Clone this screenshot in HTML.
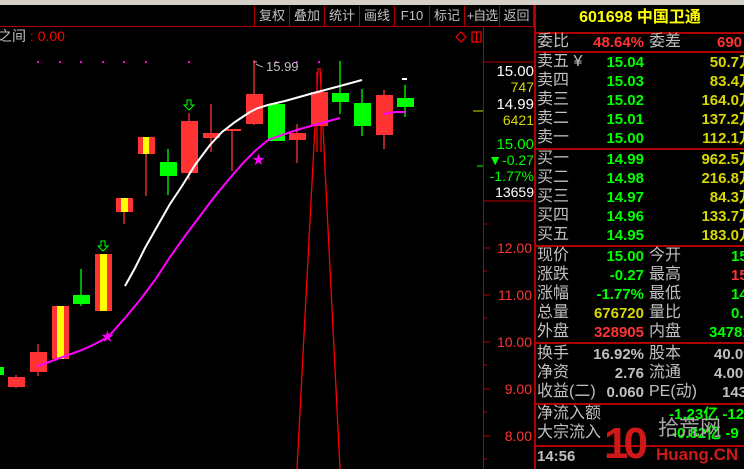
<!DOCTYPE html>
<html><head><meta charset="utf-8"><style>
*{margin:0;padding:0;box-sizing:border-box}
body{width:744px;height:469px;background:#000;overflow:hidden;position:relative;font-family:"Liberation Sans","Noto Sans CJK SC",sans-serif}
.a{position:absolute;white-space:nowrap;line-height:1}
.cn{font-family:"Liberation Sans","WenQuanYi Zen Hei","Noto Sans CJK SC",sans-serif;color:#c0c0c0;font-size:16px}
.n{font-weight:bold;font-size:15px}
.g{color:#00ff00}.y{color:#d8d800}.r{color:#ff3333}.w{color:#fff}.s{color:#c0c0c0}
.hl{position:absolute;height:2px;background:#b00000}
.tb{position:absolute;top:6px;height:21px;border-left:1px solid #b00000;color:#c0c0c0;font-size:13px;text-align:center;line-height:20px;white-space:nowrap;overflow:hidden;font-family:"Liberation Sans","WenQuanYi Zen Hei","Noto Sans CJK SC",sans-serif}
</style></head><body>
<div class="a" style="left:0;top:0;width:744px;height:5px;background:#d4d0c8"></div>
<div class="hl" style="left:0;top:26px;width:535px;height:1px"></div>
<div class="tb" style="left:254px;width:35px">复权</div>
<div class="tb" style="left:289px;width:35px">叠加</div>
<div class="tb" style="left:324px;width:35px">统计</div>
<div class="tb" style="left:359px;width:35px">画线</div>
<div class="tb" style="left:394px;width:35px">F10</div>
<div class="tb" style="left:429px;width:35px">标记</div>
<div class="tb" style="left:464px;width:35px;letter-spacing:-1px">+自选</div>
<div class="tb" style="left:499px;width:35px;border-right:1px solid #b00000">返回</div>
<div class="a cn" style="left:-2px;top:29px;font-size:14px">之间<span style="color:#f00"> : 0.00</span></div>

<svg class="a" style="left:0;top:0" width="535" height="469">
<g fill="none" stroke="#f00" stroke-width="1.2">
<path d="M456 37 l5 -5 l5 5 l-5 5z"/><rect x="472" y="32" width="9" height="10"/><line x1="476.5" y1="32" x2="476.5" y2="42"/>
</g>
<line x1="483.5" y1="27" x2="483.5" y2="469" stroke="#b00000"/>
<line x1="484" y1="62" x2="535" y2="62" stroke="#b00000"/>
<line x1="484" y1="201" x2="535" y2="201" stroke="#b00000"/>
<g stroke="#b00000"><line x1="484" y1="248" x2="490" y2="248"/><line x1="484" y1="295" x2="490" y2="295"/><line x1="484" y1="342" x2="490" y2="342"/><line x1="484" y1="389" x2="490" y2="389"/><line x1="484" y1="436" x2="490" y2="436"/><line x1="484" y1="224" x2="487" y2="224"/><line x1="484" y1="271" x2="487" y2="271"/><line x1="484" y1="318" x2="487" y2="318"/><line x1="484" y1="365" x2="487" y2="365"/><line x1="484" y1="412" x2="487" y2="412"/><line x1="484" y1="459" x2="487" y2="459"/></g>
<line x1="473" y1="111" x2="483" y2="111" stroke="#d8d800"/>
<line x1="477" y1="166" x2="483" y2="166" stroke="#00ff00"/>
<g fill="#f0f"><rect x="37" y="61" width="2" height="2"/><rect x="59" y="61" width="2" height="2"/><rect x="80" y="61" width="2" height="2"/><rect x="102" y="61" width="2" height="2"/><rect x="123" y="61" width="2" height="2"/><rect x="145" y="61" width="2" height="2"/><rect x="188" y="61" width="2" height="2"/><rect x="253" y="61" width="2" height="2"/><rect x="275" y="61" width="2" height="2"/><rect x="296" y="61" width="2" height="2"/><rect x="318" y="61" width="2" height="2"/></g>
<text x="266" y="71" fill="#c0c0c0" font-size="13" font-family="Liberation Sans">15.99</text>
<path d="M254 61 v6 M254 62 h3 M256 64 q3 2 7 3" stroke="#c0c0c0" fill="none"/>
<g stroke-width="1.3">
<line x1="16" y1="375" x2="16" y2="388" stroke="#f33"/>
<line x1="38" y1="344" x2="38" y2="376" stroke="#f33"/>
<line x1="81" y1="269" x2="81" y2="306" stroke="#0f0"/>
<line x1="124" y1="212" x2="124" y2="224" stroke="#f33"/>
<line x1="146" y1="154" x2="146" y2="196" stroke="#f33"/>
<line x1="168" y1="149" x2="168" y2="195" stroke="#0f0"/>
<line x1="189" y1="113" x2="189" y2="180" stroke="#f33"/>
<line x1="211" y1="104" x2="211" y2="152" stroke="#f33"/>
<line x1="232" y1="130" x2="232" y2="171" stroke="#f33"/>
<line x1="254" y1="60" x2="254" y2="125" stroke="#f33"/>
<line x1="297" y1="124" x2="297" y2="163" stroke="#f33"/>
<line x1="340" y1="61" x2="340" y2="114" stroke="#0f0"/>
<line x1="362" y1="89" x2="362" y2="136" stroke="#0f0"/>
<line x1="384" y1="90" x2="384" y2="149" stroke="#f33"/>
<line x1="405" y1="85" x2="405" y2="117" stroke="#0f0"/>
</g>
<path d="M318 68 L297 469 M320 68 L340 469 M317 72 v80 M321 72 v80" stroke="#f00" stroke-width="1.3" fill="none"/>
<rect x="0" y="367" width="4" height="8" fill="#0f0"/>
<rect x="8" y="377" width="17" height="10" fill="#f33"/>
<rect x="30" y="352" width="17" height="20" fill="#f33"/>
<rect x="52" y="306" width="17" height="53" fill="#f33"/><rect x="57" y="306" width="7" height="53" fill="#ff0"/>
<rect x="73" y="295" width="17" height="9" fill="#0f0"/>
<rect x="95" y="254" width="17" height="57" fill="#f33"/><rect x="100" y="254" width="7" height="57" fill="#ff0"/>
<rect x="116" y="198" width="17" height="14" fill="#f33"/><rect x="121" y="198" width="7" height="14" fill="#ff0"/>
<rect x="138" y="137" width="17" height="17" fill="#f33"/><rect x="143" y="137" width="6" height="17" fill="#ff0"/>
<rect x="160" y="162" width="17" height="14" fill="#0f0"/>
<rect x="181" y="121" width="17" height="52" fill="#f33"/>
<rect x="203" y="133" width="17" height="5" fill="#f33"/>
<rect x="224" y="129" width="17" height="2" fill="#f33"/>
<rect x="246" y="94" width="17" height="30" fill="#f33"/>
<rect x="268" y="104" width="17" height="37" fill="#0f0"/>
<rect x="289" y="133" width="17" height="7" fill="#f33"/>
<rect x="311" y="92" width="17" height="34" fill="#f33"/>
<rect x="332" y="93" width="17" height="9" fill="#0f0"/>
<rect x="354" y="103" width="17" height="23" fill="#0f0"/>
<rect x="376" y="95" width="17" height="40" fill="#f33"/>
<rect x="397" y="98" width="17" height="9" fill="#0f0"/>
<path d="M101 241 h4 v5 h3 l-5 5 l-5 -5 h3z" fill="none" stroke="#0f0"/>
<path d="M187 100 h4 v5 h3 l-5 5 l-5 -5 h3z" fill="none" stroke="#0f0"/>
<polyline points="125,286 135,268 145,248 158,225 170,204 182,186 195,165 210,145 222,132 235,122 250,112 258,108 268,105 285,101 310,94 325,90 340,86 362,80" fill="none" stroke="#fff" stroke-width="2"/>
<rect x="402" y="78" width="5" height="2" fill="#fff"/>
<polyline points="38,366 60,358 82,350 95,344 108,337 125,318 140,300 155,280 170,257 185,236 200,216 215,196 230,178 243,163 255,151 268,140 285,134 300,129 318,124 340,118" fill="none" stroke="#f0f" stroke-width="2"/>
<polyline points="384,114 395,112 405,112" fill="none" stroke="#f0f" stroke-width="2"/>
<text x="101" y="341" fill="#f0f" font-size="13">★</text>
<text x="252" y="164" fill="#f0f" font-size="13">★</text>
</svg>

<div class="a n w" style="right:210px;top:64px;font-weight:normal">15.00</div>
<div class="a y" style="right:210px;top:80px;font-size:14px">747</div>
<div class="a w" style="right:210px;top:97px;font-size:15px">14.99</div>
<div class="a y" style="right:210px;top:113px;font-size:14px">6421</div>
<div class="a g" style="right:210px;top:137px;font-size:15px">15.00</div>
<div class="a g" style="right:210px;top:153px;font-size:14px">▼-0.27</div>
<div class="a g" style="right:210px;top:169px;font-size:14px">-1.77%</div>
<div class="a w" style="right:210px;top:185px;font-size:14px">13659</div>
<div class="a r" style="right:212px;top:241px;font-size:14px">12.00</div>
<div class="a r" style="right:212px;top:288px;font-size:14px">11.00</div>
<div class="a r" style="right:212px;top:335px;font-size:14px">10.00</div>
<div class="a r" style="right:212px;top:382px;font-size:14px">9.00</div>
<div class="a r" style="right:212px;top:429px;font-size:14px">8.00</div>

<div class="a" style="left:534px;top:5px;width:2px;height:464px;background:#b00000"></div>
<div class="a" style="left:536px;top:10px;width:208px;text-align:center;color:#ff0;font-weight:bold;font-size:16px;font-family:'Liberation Sans','WenQuanYi Zen Hei','Noto Sans CJK SC',sans-serif">601698 中国卫通</div>
<div class="hl" style="left:536px;top:32px;width:208px"></div>
<div class="hl" style="left:536px;top:51px;width:208px"></div>
<div class="hl" style="left:536px;top:148px;width:208px"></div>
<div class="hl" style="left:536px;top:245px;width:208px"></div>
<div class="hl" style="left:536px;top:342px;width:208px"></div>
<div class="hl" style="left:536px;top:403px;width:208px"></div>
<div class="hl" style="left:536px;top:445px;width:208px"></div>

<div class="a cn" style="left:537px;top:34px">委比</div><div class="a n r" style="right:100px;top:35px">48.64%</div><div class="a cn" style="left:649px;top:34px">委差</div><div class="a n r" style="left:717px;top:35px">690</div>

<div class="a cn" style="left:537px;top:54px">卖五 ¥</div><div class="a n g" style="right:100px;top:55px">15.04</div><div class="a n y" style="right:-10px;top:55px">50.7万</div>
<div class="a cn" style="left:537px;top:73px">卖四</div><div class="a n g" style="right:100px;top:74px">15.03</div><div class="a n y" style="right:-10px;top:74px">83.4万</div>
<div class="a cn" style="left:537px;top:92px">卖三</div><div class="a n g" style="right:100px;top:93px">15.02</div><div class="a n y" style="right:-10px;top:93px">164.0万</div>
<div class="a cn" style="left:537px;top:111px">卖二</div><div class="a n g" style="right:100px;top:112px">15.01</div><div class="a n y" style="right:-10px;top:112px">137.2万</div>
<div class="a cn" style="left:537px;top:130px">卖一</div><div class="a n g" style="right:100px;top:131px">15.00</div><div class="a n y" style="right:-10px;top:131px">112.1万</div>

<div class="a cn" style="left:537px;top:151px">买一</div><div class="a n g" style="right:100px;top:152px">14.99</div><div class="a n y" style="right:-10px;top:152px">962.5万</div>
<div class="a cn" style="left:537px;top:170px">买二</div><div class="a n g" style="right:100px;top:171px">14.98</div><div class="a n y" style="right:-10px;top:171px">216.8万</div>
<div class="a cn" style="left:537px;top:189px">买三</div><div class="a n g" style="right:100px;top:190px">14.97</div><div class="a n y" style="right:-10px;top:190px">84.3万</div>
<div class="a cn" style="left:537px;top:208px">买四</div><div class="a n g" style="right:100px;top:209px">14.96</div><div class="a n y" style="right:-10px;top:209px">133.7万</div>
<div class="a cn" style="left:537px;top:227px">买五</div><div class="a n g" style="right:100px;top:228px">14.95</div><div class="a n y" style="right:-10px;top:228px">183.0万</div>

<div class="a cn" style="left:537px;top:248px">现价</div><div class="a n g" style="right:100px;top:249px">15.00</div><div class="a cn" style="left:649px;top:248px">今开</div><div class="a n g" style="left:731px;top:249px">15.2</div>
<div class="a cn" style="left:537px;top:267px">涨跌</div><div class="a n g" style="right:100px;top:268px">-0.27</div><div class="a cn" style="left:649px;top:267px">最高</div><div class="a n r" style="left:731px;top:268px">15.4</div>
<div class="a cn" style="left:537px;top:286px">涨幅</div><div class="a n g" style="right:100px;top:287px">-1.77%</div><div class="a cn" style="left:649px;top:286px">最低</div><div class="a n g" style="left:731px;top:287px">14.8</div>
<div class="a cn" style="left:537px;top:305px">总量</div><div class="a n y" style="right:100px;top:306px">676720</div><div class="a cn" style="left:649px;top:305px">量比</div><div class="a n g" style="left:731px;top:306px">0.7</div>
<div class="a cn" style="left:537px;top:324px">外盘</div><div class="a n r" style="right:100px;top:325px">328905</div><div class="a cn" style="left:649px;top:324px">内盘</div><div class="a n g" style="left:709px;top:325px">34781</div>

<div class="a cn" style="left:537px;top:346px">换手</div><div class="a n s" style="right:100px;top:347px">16.92%</div><div class="a cn" style="left:649px;top:346px">股本</div><div class="a n s" style="left:714px;top:347px">40.0亿</div>
<div class="a cn" style="left:537px;top:365px">净资</div><div class="a n s" style="right:100px;top:366px">2.76</div><div class="a cn" style="left:649px;top:365px">流通</div><div class="a n s" style="left:714px;top:366px">4.00亿</div>
<div class="a cn" style="left:537px;top:384px">收益(二)</div><div class="a n s" style="right:100px;top:385px">0.060</div><div class="a cn" style="left:649px;top:384px">PE(动)</div><div class="a n s" style="left:722px;top:385px">143</div>

<div class="a cn" style="left:537px;top:406px">净流入额</div><div class="a n g" style="left:669px;top:407px">-1.23亿 -12</div>
<div class="a cn" style="left:537px;top:425px">大宗流入</div><div class="a n g" style="left:672px;top:426px">-0.82亿 -9</div>
<div class="a n s" style="left:537px;top:449px;font-size:15px">14:56</div>

<div class="a" style="left:604px;top:422px;font-size:44px;font-weight:bold;color:#d01818;letter-spacing:-5px;font-family:'Liberation Sans',sans-serif">10</div>
<div class="a" style="left:658px;top:418px;font-size:21px;color:#a8a8a8;font-family:'Liberation Sans','WenQuanYi Zen Hei',sans-serif">拾荒网</div>
<div class="a" style="left:656px;top:446px;font-size:17px;font-weight:bold;color:#d01818">Huang.CN</div>
</body></html>
